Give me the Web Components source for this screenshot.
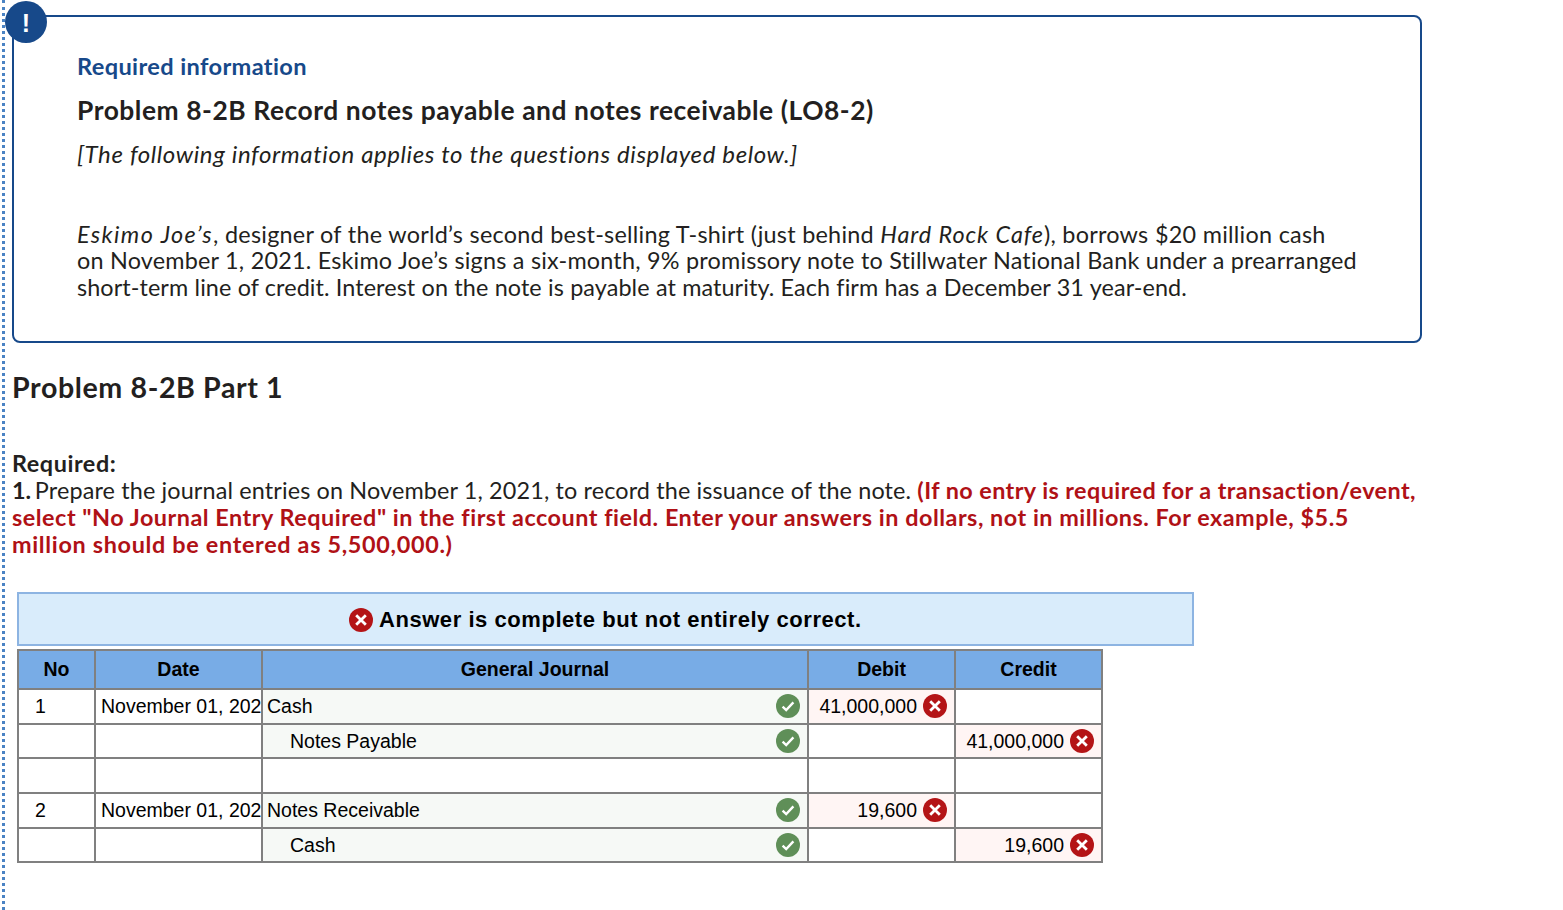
<!DOCTYPE html>
<html>
<head>
<meta charset="utf-8">
<title>Problem 8-2B</title>
<style>
    html, body { margin: 0; padding: 0; background: #fff; }
    body { font-family: "Lato", "Open Sans", sans-serif; color: #231f20; }
</style>
</head>
<body>
<question-page>
    <notice-box>
        <span slot="label">Required information</span>
        <span slot="title">Problem 8-2B Record notes payable and notes receivable (LO8-2)</span>
        <span slot="note">[The following information applies to the questions displayed below.]</span>
        <i class="wide">Eskimo Joe’s</i><span class="l1">, designer of the world’s second best-selling T-shirt (just behind </span><i>Hard Rock Cafe</i><span class="l1">), borrows $20 million cash</span><br><span class="l2">on November 1, 2021. Eskimo Joe’s signs a six-month, 9% promissory note to Stillwater National Bank under a prearranged</span><br><span class="l3">short-term line of credit. Interest on the note is payable at maturity. Each firm has a December 31 year-end.</span>
    </notice-box>
    <part-heading>Problem 8-2B Part 1</part-heading>
    <required-text>
        <b>Required:</b><br>
        <b class="num">1.</b> Prepare the journal entries on November 1, 2021, to record the issuance of the note. <em class="first">(If no entry is required for a transaction/event,</em><br><em>select "No Journal Entry Required" in the first account field. Enter your answers in dollars, not in millions. For example, $5.5</em><br><em class="last">million should be entered as 5,500,000.)</em>
    </required-text>
    <answer-banner>Answer is complete but not entirely correct.</answer-banner>
    <journal-table>
        <journal-row header no="No" date="Date" account="General Journal" debit="Debit" credit="Credit"></journal-row>
        <journal-row no="1" date="November 01, 202" account="Cash" debit="41,000,000" mark="ok"></journal-row>
        <journal-row account="Notes Payable" indent credit="41,000,000" mark="ok"></journal-row>
        <journal-row></journal-row>
        <journal-row no="2" date="November 01, 202" account="Notes Receivable" debit="19,600" mark="ok"></journal-row>
        <journal-row account="Cash" indent credit="19,600" mark="ok"></journal-row>
    </journal-table>
</question-page>

<script>
class StatusIcon extends HTMLElement {
    connectedCallback() {
        const ok = this.getAttribute('type') === 'ok';
        this.attachShadow({ mode: 'open' }).innerHTML = `
            <style>
                :host { display: inline-block; width: 24px; height: 24px; flex: none; }
                svg { display: block; }
            </style>
            <svg width="24" height="24" viewBox="0 0 24 24">
                <circle cx="12" cy="12" r="12" fill="${ok ? '#5f8f58' : '#b41416'}"/>
                ${ok
                    ? '<path d="M6.6 12.6l3.6 3.4 7.2-7.6" fill="none" stroke="#fff" stroke-width="2.4"/>'
                    : '<path d="M7.2 7.2l9.6 9.6M16.8 7.2l-9.6 9.6" fill="none" stroke="#fff" stroke-width="2.8"/>'}
            </svg>
        `;
    }
}

class QuestionPage extends HTMLElement {
    constructor() {
        super();
        this.attachShadow({ mode: 'open' }).innerHTML = `
            <style>
                :host {
                    display: block;
                    box-sizing: border-box;
                    height: 910px;
                    overflow: hidden;
                    margin-left: 2px;
                    padding: 15px 0 0 7px;
                    border-left: 3px dotted #4a83c4;
                }
            </style>
            <slot></slot>
        `;
    }
}

class NoticeBox extends HTMLElement {
    constructor() {
        super();
        this.attachShadow({ mode: 'open' }).innerHTML = `
            <style>
                :host {
                    display: block;
                    position: relative;
                    box-sizing: border-box;
                    width: 1410px;
                    height: 328px;
                    padding: 36px 20px 0 63px;
                    border: 2px solid #17498a;
                    border-radius: 8px;
                    font-size: 23.4px;
                    line-height: 26.6px;
                    word-spacing: 0.2px;
                    letter-spacing: 0.15px;
                    white-space: nowrap;
                }
                .badge {
                    position: absolute;
                    left: -9px;
                    top: -16px;
                    width: 42px;
                    height: 42px;
                    border-radius: 50%;
                    background: #17498a;
                    color: #fff;
                    font: bold 25px/44px "Liberation Sans", sans-serif;
                    text-align: center;
                }
                .label { color: #17498a; font-weight: 700; font-size: 23.6px; letter-spacing: 0.35px; }
                .title { margin-top: 17px; font-weight: 700; font-size: 26.4px; letter-spacing: 0.52px; }
                .note { margin-top: 18px; font-style: italic; font-size: 24px; letter-spacing: 0.6px; }
                .body { margin-top: 53px; }
                ::slotted(i) { letter-spacing: 0.9px; }
                ::slotted(i.wide) { letter-spacing: 1.4px; }
                ::slotted(.l1) { letter-spacing: 0.24px; }
                ::slotted(.l2) { letter-spacing: 0.18px; }
                ::slotted(.l3) { letter-spacing: 0.08px; }
            </style>
            <div class="badge">!</div>
            <div class="label"><slot name="label"></slot></div>
            <div class="title"><slot name="title"></slot></div>
            <div class="note"><slot name="note"></slot></div>
            <div class="body"><slot></slot></div>
        `;
    }
}

class PartHeading extends HTMLElement {
    constructor() {
        super();
        this.attachShadow({ mode: 'open' }).innerHTML = `
            <style>
                :host {
                    display: block;
                    margin-top: 28px;
                    font-size: 28.6px;
                    line-height: 32px;
                    font-weight: 700;
                    letter-spacing: 0.6px;
                }
            </style>
            <slot></slot>
        `;
    }
}

class RequiredText extends HTMLElement {
    constructor() {
        super();
        this.attachShadow({ mode: 'open' }).innerHTML = `
            <style>
                :host {
                    display: block;
                    margin-top: 47px;
                    font-size: 23.4px;
                    line-height: 27px;
                    letter-spacing: 0.14px;
                    white-space: nowrap;
                }
                ::slotted(b) { letter-spacing: 0.55px; }
                ::slotted(b.num) { letter-spacing: 0; margin-right: -2.5px; }
                ::slotted(em) {
                    color: #b01116;
                    font-style: normal;
                    font-weight: 700;
                    letter-spacing: 0.51px;
                }
                ::slotted(em.first) { letter-spacing: 0.42px; }
                ::slotted(em.last) { letter-spacing: 0.67px; }
            </style>
            <slot></slot>
        `;
    }
}

class AnswerBanner extends HTMLElement {
    constructor() {
        super();
        this.attachShadow({ mode: 'open' }).innerHTML = `
            <style>
                :host {
                    display: flex;
                    align-items: center;
                    gap: 6px;
                    box-sizing: border-box;
                    width: 1177px;
                    height: 54px;
                    margin: 34px 0 3px 5px;
                    padding: 1px 0 0 330px;
                    background: #d9ecfb;
                    border: 2px solid #8db4e2;
                    font: bold 22px "Liberation Sans", sans-serif;
                    letter-spacing: 0.55px;
                    color: #000;
                }
            </style>
            <status-icon type="bad"></status-icon>
            <slot></slot>
        `;
    }
}

class JournalTable extends HTMLElement {
    constructor() {
        super();
        this.attachShadow({ mode: 'open' }).innerHTML = `
            <style>
                :host {
                    display: block;
                    width: 1084px;
                    margin-left: 5px;
                    border-top: 2px solid #808080;
                    border-left: 2px solid #808080;
                    font: 19.5px "Liberation Sans", sans-serif;
                    color: #000;
                }
            </style>
            <slot></slot>
        `;
    }
}

class JournalRow extends HTMLElement {
    connectedCallback() {
        const header = this.hasAttribute('header');
        const get = (name) => this.getAttribute(name) || '';
        const no = get('no');
        const date = get('date');
        const account = get('account');
        const debit = get('debit');
        const credit = get('credit');
        const mark = get('mark');

        const amount = (value) => header
            ? value
            : (value ? `<span>${value}</span><status-icon type="bad"></status-icon>` : '');

        this.attachShadow({ mode: 'open' }).innerHTML = `
            <style>
                :host {
                    display: grid;
                    grid-template-columns: 77px 167px 546px 147px 147px;
                    height: 34.7px;
                    line-height: 32px;
                }
                :host([header]) { height: 39px; font-weight: bold; }
                .cell {
                    display: flex;
                    align-items: center;
                    box-sizing: border-box;
                    min-width: 0;
                    border-right: 2px solid #808080;
                    border-bottom: 2px solid #808080;
                    white-space: nowrap;
                }
                .no { padding-left: 16px; }
                .date { padding-left: 5px; }
                .account { padding-left: 4px; padding-right: 7px; background: #f6f9f6; }
                .account span { flex: 1; }
                :host([indent]) .account span { padding-left: 23px; }
                .amount { justify-content: flex-end; gap: 6px; padding-right: 7px; }
                .amount.wrong { background: #fff5f4; }
                :host([header]) .cell {
                    justify-content: center;
                    padding: 0 0 2px;
                    background: #78ace6;
                }
                :host([header]) .account span { flex: none; }
            </style>
            <div class="cell no">${no}</div>
            <div class="cell date">${date}</div>
            <div class="cell account"><span>${account}</span>${mark ? `<status-icon type="${mark}"></status-icon>` : ''}</div>
            <div class="cell amount ${debit && !header ? 'wrong' : ''}">${amount(debit)}</div>
            <div class="cell amount ${credit && !header ? 'wrong' : ''}">${amount(credit)}</div>
        `;
        if (!account) this.shadowRoot.querySelector('.account').style.background = '#fff';
    }
}

customElements.define('status-icon', StatusIcon);
customElements.define('question-page', QuestionPage);
customElements.define('notice-box', NoticeBox);
customElements.define('part-heading', PartHeading);
customElements.define('required-text', RequiredText);
customElements.define('answer-banner', AnswerBanner);
customElements.define('journal-table', JournalTable);
customElements.define('journal-row', JournalRow);
</script>
</body>
</html>
